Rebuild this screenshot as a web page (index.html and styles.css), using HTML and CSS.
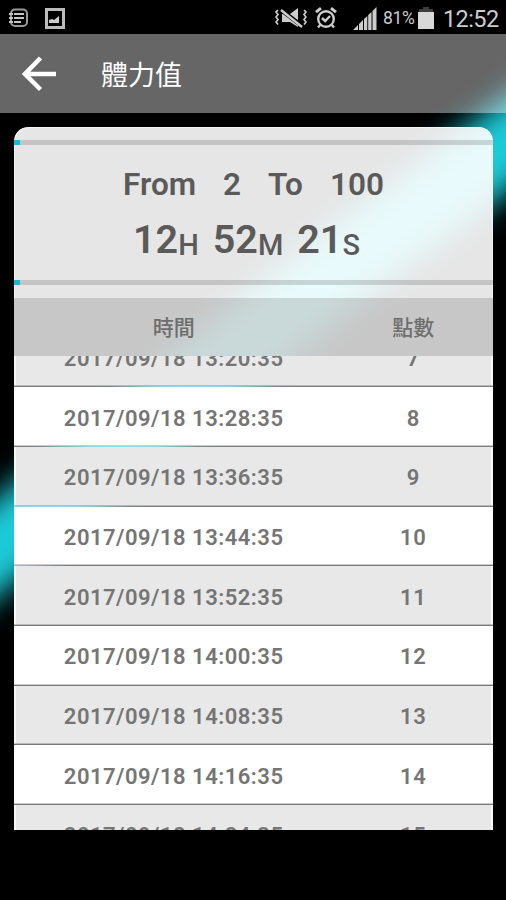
FILE: index.html
```html
<!DOCTYPE html>
<html lang="zh-Hant">
<head>
<meta charset="utf-8">
<title>體力值</title>
<link rel="stylesheet" href="styles.css">
</head>
<body>
<div class="screen">
  <svg class="beam" viewBox="0 0 506 900" aria-hidden="true">
    <defs><filter id="glow" filterUnits="userSpaceOnUse" x="-150" y="-100" width="800" height="900"><feGaussianBlur stdDeviation="15"/></filter></defs>
    <path d="M-60 592 L5 541 L95 468 L180 397 L275 321 L345 264 L425 206 L500 149 L580 92" fill="none" stroke="#1acbd8" stroke-width="76" filter="url(#glow)"/>
  </svg>
  <header class="statusbar">
    <svg class="st-note" viewBox="0 0 20 20"><rect x="2" y="1.500" width="16" height="16.500" rx="4" fill="none" stroke="#999" stroke-width="2"/><path d="M0 6h4M0 10h4M0 14h4M5 6h10M5 10h10M5 14h7" stroke="#c4c4c4" stroke-width="2"/></svg>
    <svg class="st-image" viewBox="0 0 20 21"><path d="M1.500 1.500h17v18h-17z" fill="none" stroke="#bbb" stroke-width="3"/><path d="M4 15v-3l3-1 2 1 5-4v7z" fill="#ccc"/></svg>
    <span class="spacer"></span>
    <svg class="st-mute" viewBox="0 0 32 21"><g fill="none" stroke="#ccc" stroke-width="1.700"><path d="M3 2l-2 2 2 2.500-2 2.500 2 2.500-2 2.500 2 2.500M29 2l2 2-2 2.500 2 2.500-2 2.500 2 2.500-2 2.500"/></g><path d="M7 6h8l8-6v19l-8-5H7z" fill="#ccc"/><path d="M5 1l22 17" stroke="#000" stroke-width="4.200"/><path d="M6 2l21 17" stroke="#ccc" stroke-width="2.400"/></svg>
    <svg class="st-alarm" viewBox="0 0 22 22"><g fill="none" stroke="#ccc" stroke-width="2.400"><circle cx="11" cy="12" r="7.800"/><path d="M7 11l3.200 3L15 9" /><path d="M1 5.200l5-4M21 5.200l-5-4" stroke-width="3"/><path d="M5.500 17.500l-2.500 3M16.500 17.500l2.500 3"/></g></svg>
    <svg class="st-signal" viewBox="0 0 24 23"><path d="M0 23l5-5v5zM6 17l4-4v10H6zM11 12l3.300-3v14H11zM15.200 8l3.300-3v18h-3.300zM19.500 4L23.500 0v23h-4z" fill="#ccc"/></svg>
    <span class="battery-text">81%</span>
    <svg class="st-battery" viewBox="0 0 16 22"><path d="M5 0h6v2h4v3H1V2h4z" fill="#3c3c3c"/><path d="M0 5h16v17H0z" fill="#d8d8d8"/></svg>
    <span class="clock">12:52</span>
  </header>
  <nav class="appbar">
    <svg class="back" viewBox="0 0 36 36"><path d="M34 18H3M18.500 2L3 18l15.500 15.500" fill="none" stroke="#fff" stroke-width="4.500"/></svg>
    <h1 class="title">體力值</h1>
  </nav>
  <main class="card">
    <section class="summary">
      <div class="bar"></div>
      <div class="counter">
        <div class="range"><span>From</span><span>2</span><span>To</span><span>100</span></div>
        <div class="remain"><span>12<small>H</small></span><span>52<small>M</small></span><span>21<small>S</small></span></div>
      </div>
      <div class="bar"></div>
    </section>
    <div class="thead"><span>時間</span><span>點數</span></div>
    <div class="list">
      <div class="rows">
        <div class="row"><span>2017/09/18 13:20:35</span><span>7</span></div>
        <div class="row"><span>2017/09/18 13:28:35</span><span>8</span></div>
        <div class="row"><span>2017/09/18 13:36:35</span><span>9</span></div>
        <div class="row"><span>2017/09/18 13:44:35</span><span>10</span></div>
        <div class="row"><span>2017/09/18 13:52:35</span><span>11</span></div>
        <div class="row"><span>2017/09/18 14:00:35</span><span>12</span></div>
        <div class="row"><span>2017/09/18 14:08:35</span><span>13</span></div>
        <div class="row"><span>2017/09/18 14:16:35</span><span>14</span></div>
        <div class="row"><span>2017/09/18 14:24:35</span><span>15</span></div>
      </div>
    </div>
  </main>
</div>
</body>
</html>
```
FILE: styles.css
```css
* { box-sizing: border-box; }
body { margin: 0; background: #000; font-family: Roboto, "Noto Sans CJK TC", sans-serif; }
.screen { position: relative; width: 506px; height: 900px; overflow: hidden; background: #000; display: flex; flex-direction: column; isolation: isolate; }
.beam { position: absolute; inset: 0; width: 506px; height: 900px; z-index: -1; }

.statusbar { height: 34px; flex: none; display: flex; align-items: center; padding: 2px 9px 0 9px; background: #000; color: #ccc; }
.statusbar svg { flex: none; }
.st-note { width: 20px; height: 20px; }
.st-image { width: 20px; height: 21px; margin-left: 16px; }
.spacer { flex: 1; }
.st-mute { width: 32px; height: 21px; }
.st-alarm { width: 22px; height: 22px; margin-left: 8px; }
.st-signal { width: 24px; height: 23px; margin-left: 16px; }
.battery-text { width: 32px; margin-left: 6px; font-size: 17.500px; line-height: 22px; letter-spacing: -0.3px; white-space: nowrap; }
.st-battery { width: 16px; height: 22px; margin-left: 3px; }
.clock { width: 54px; margin-left: 9px; padding-top: 2px; font-size: 23.500px; line-height: 30px; letter-spacing: -0.6px; white-space: nowrap; }

.appbar { height: 79px; flex: none; display: flex; align-items: center; padding-left: 22px; background: rgba(255, 255, 255, .4); }
.back { width: 36px; height: 36px; }
.title { margin: 4px 0 0 43px; font-size: 27px; line-height: 40px; font-weight: 400; color: #fff; }

.card { width: 479px; height: 703px; margin: 14px 0 0 14px; flex: none; display: flex; flex-direction: column; overflow: hidden; border-radius: 14px 14px 0 0; }
.summary { height: 171px; padding-top: 13px; background: rgba(255, 255, 255, .9); box-shadow: inset 1px 1px rgba(255, 255, 255, .6), inset -1px 0 rgba(255, 255, 255, .6); border-radius: 14px 14px 0 0; }
.bar { height: 5px; background: linear-gradient(90deg, #18b8d0 6px, rgba(0, 0, 0, .15) 6px); }
.counter { height: 135px; padding-top: 20px; color: #5a5a5a; font-weight: 600; }
.range { display: flex; justify-content: center; gap: 27px; font-size: 31.500px; line-height: 40px; }
.remain { display: flex; justify-content: center; gap: 14px; font-size: 39.500px; line-height: 46px; margin: 12px 14px 0 0; }
.remain small { font-size: 29px; font-weight: 500; position: relative; top: 2px; }

.thead { height: 58px; flex: none; display: grid; grid-template-columns: 2fr 1fr; align-items: center; text-align: center; padding-top: 2px; background: linear-gradient(rgba(0, 0, 0, .135), rgba(0, 0, 0, .135)), rgba(255, 255, 255, .9); color: #6e6e6e; font-size: 21px; font-weight: 500; line-height: 30px; }
.list { height: 474px; flex: none; overflow: hidden; background: rgba(255, 255, 255, .48); }
.rows { display: flex; flex-direction: column; gap: 1px; margin-top: -28.500px; }
.row { height: 58.700px; flex: none; display: grid; grid-template-columns: 2fr 1fr; align-items: center; text-align: center; background: #fff; color: #757575; font-size: 22px; font-weight: 600; letter-spacing: .5px; line-height: 30px; padding-top: 4px; box-shadow: inset 0 -1px rgba(0, 0, 0, .2); }
.row:nth-child(odd) { background: #e8e8e8; box-shadow: inset 0 -1px rgba(0, 0, 0, .2), inset 2px 0 #f8f8f8, inset -2px 0 #f8f8f8; }
```
